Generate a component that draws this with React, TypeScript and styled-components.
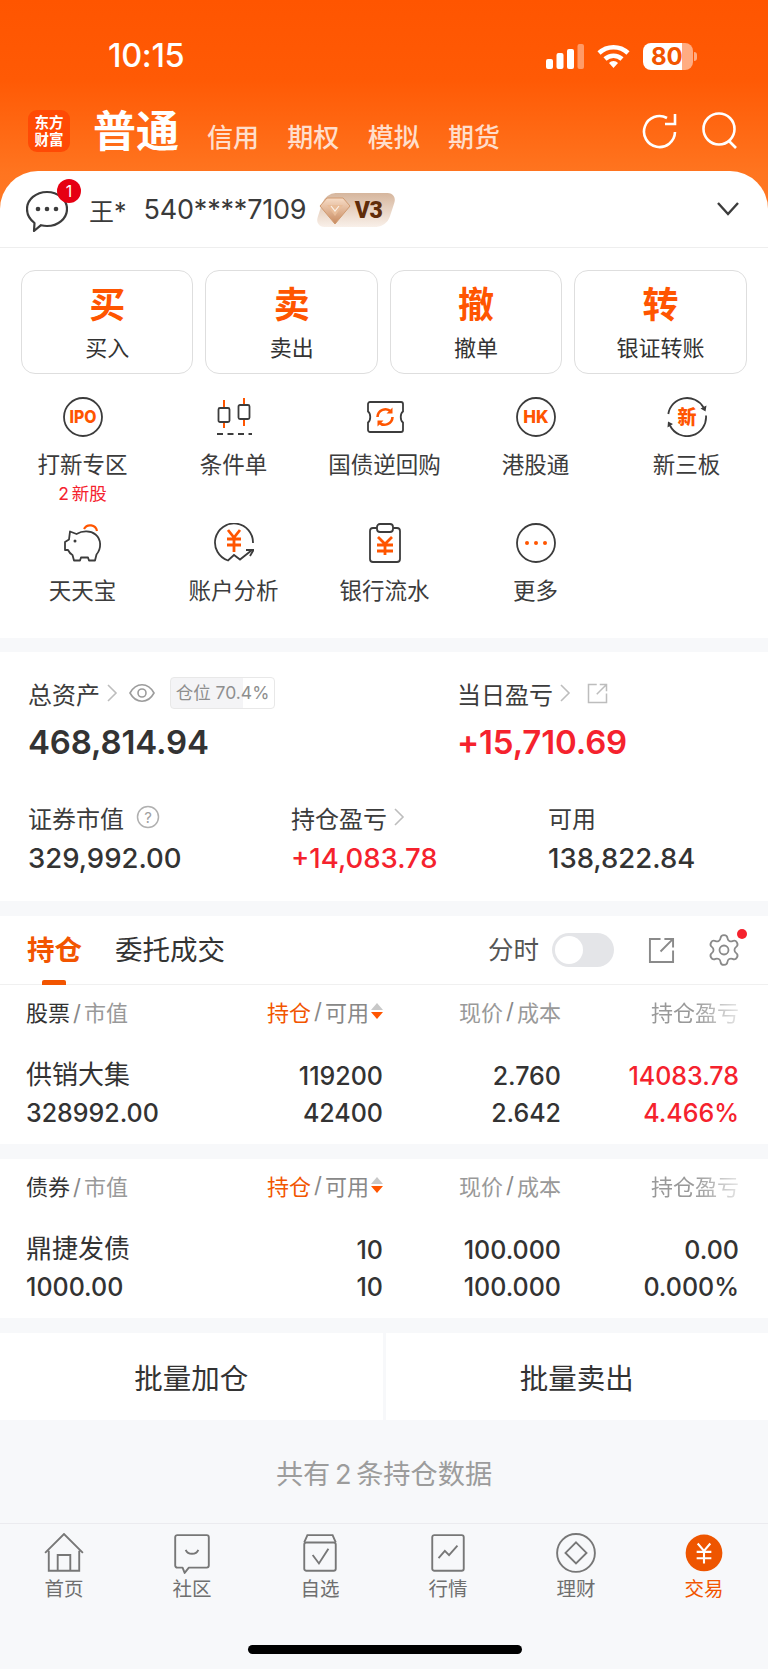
import styled, { createGlobalStyle } from 'styled-components';
import { ReactNode } from 'react';
import { Settings } from 'lucide-react';

const GlobalStyle = createGlobalStyle`
  html, body {
    margin: 0;
    padding: 0;
    background: #f7f8fa;
    font-family: Inter, "Noto Sans CJK SC", sans-serif;
  }
  * { box-sizing: border-box; }
`;

const ORANGE = '#f25500';
const RED = '#f5222d';
const DARK = '#333333';
const GREY = '#999999';

const Page = styled.div`
  width: 768px;
  height: 1669px;
  overflow: hidden;
  display: flex;
  flex-direction: column;
  background: #f7f8fa;
  color: ${DARK};
`;

const Header = styled.header`
  height: 211px;
  margin-bottom: -40px;
  background: linear-gradient(180deg, #ff5500 0, #ff5a05 80px, #ff741f 171px, #ff7a26 211px);
  color: #fff;
  display: flex;
  flex-direction: column;
`;

const StatusBar = styled.div`
  height: 110px;
  padding: 37px 71px 0 108px;
  display: flex;
  justify-content: space-between;
  align-items: flex-start;
`;

const Clock = styled.div`
  font-size: 32.5px;
  font-weight: 500;
  line-height: 38px;
  letter-spacing: -0.3px;
  white-space: nowrap;
`;

const StatusIcons = styled.div`
  display: flex;
  align-items: center;
  height: 38px;
  gap: 13px;
`;

const Battery = styled.div`
  width: 50px;
  height: 27px;
  border-radius: 8px;
  overflow: hidden;
  background: linear-gradient(90deg, #fff 0 78%, rgba(255, 255, 255, 0.5) 78% 100%);
  color: ${ORANGE};
  font-size: 24px;
  font-weight: 700;
  line-height: 27px;
  padding-left: 8px;
`;

const BatteryCap = styled.div`
  width: 3px;
  height: 9px;
  margin-left: -12px;
  border-radius: 0 3px 3px 0;
  background: rgba(255, 255, 255, 0.5);
`;

const TopNav = styled.div`
  height: 42px;
  padding: 0 30px 0 28px;
  display: flex;
  align-items: center;
`;

const Logo = styled.div`
  width: 42px;
  height: 42px;
  border-radius: 9px;
  background: #ff4a05;
  font-size: 14.5px;
  font-weight: 700;
  line-height: 17px;
  text-align: center;
  padding-top: 4px;
  margin-right: 23px;
`;

const ActiveMode = styled.div`
  font-size: 43px;
  font-weight: 700;
  line-height: 42px;
  margin-right: 28px;
`;

const Mode = styled.div`
  font-size: 26px;
  font-weight: 500;
  line-height: 30px;
  margin: 14px 28.3px 0 0;
  color: rgba(255, 255, 255, 0.78);
`;

const NavActions = styled.div`
  margin-left: auto;
  display: flex;
  gap: 24px;
`;

const Account = styled.div`
  height: 77px;
  border-radius: 38px 38px 0 0;
  background: #fff;
  border-bottom: 1.5px solid #eeeeee;
  padding: 0 29px 0 26px;
  display: flex;
  align-items: center;
  flex: none;
  position: relative;
`;

const ChatWrap = styled.div`
  position: relative;
  width: 42px;
  height: 42px;
  margin-right: 21px;
  margin-top: 4px;
`;

const Badge = styled.span`
  position: absolute;
  left: 31px;
  top: -11px;
  width: 24px;
  height: 24px;
  border-radius: 50%;
  background: #e60012;
  color: #fff;
  font-size: 16px;
  line-height: 24px;
  text-align: center;
`;

const AccountName = styled.span`
  font-size: 25px;
  margin-right: 17px;
  color: #3a3a3a;
  margin-top: 1px;
`;

const AccountNo = styled.span`
  font-size: 27px;
  color: #3a3a3a;
  margin-right: 9px;
  margin-top: 1px;
  letter-spacing: -0.2px;
`;

const Level = styled.div`
  position: relative;
  width: 82px;
  height: 34px;
  margin-top: 2px;
  display: flex;
  align-items: center;
  justify-content: flex-end;
  padding-right: 15px;
  color: #5f2c0a;
  font-family: Roboto, sans-serif;
  font-size: 23px;
  font-weight: 900;
  letter-spacing: -0.5px;
`;

const LevelBg = styled.div`
  position: absolute;
  inset: 0 5px;
  transform: skewX(-18deg);
  border-radius: 10px;
  background: linear-gradient(180deg, #d6b69d 0%, #f9f0e9 100%);
`;

const LevelText = styled.span`
  position: relative;
`;

const Chevron = styled.div`
  margin-left: auto;
  display: flex;
`;

const ActionsSection = styled.section`
  background: #fff;
  height: 390px;
  flex: none;
  padding: 22px 21px 0;
  margin-bottom: 14px;
`;

const TradeButtons = styled.div`
  display: grid;
  grid-template-columns: repeat(4, 172.3px);
  column-gap: 12.2px;
`;

const TradeButton = styled.div`
  height: 104px;
  border: 1.5px solid #dedede;
  border-radius: 14px;
  text-align: center;
  padding-top: 9px;
`;

const TradeChar = styled.div`
  font-size: 36px;
  line-height: 50px;
  font-weight: 700;
  color: #ff5500;
`;

const TradeLabel = styled.div`
  font-size: 22px;
  line-height: 30px;
  margin-top: 3px;
  color: ${DARK};
`;

const Shortcuts = styled.div`
  margin: 23px 0 0 -14px;
  display: grid;
  grid-template-columns: repeat(5, 151px);
  grid-auto-rows: 126px;
`;

const Shortcut = styled.div`
  display: flex;
  flex-direction: column;
  align-items: center;
`;

const ShortcutIcon = styled.div`
  width: 40px;
  height: 40px;
`;

const ShortcutLabel = styled.div`
  font-size: 22.5px;
  line-height: 30px;
  margin-top: 13px;
  color: #3c3c3c;
  white-space: nowrap;
`;

const ShortcutNote = styled.div`
  font-size: 17.5px;
  line-height: 24px;
  margin-top: 2px;
  word-spacing: -2px;
  color: ${RED};
`;

const Assets = styled.section`
  background: #fff;
  height: 249px;
  flex: none;
  margin-bottom: 15px;
  padding: 25px 0 0 28px;
`;

const AssetTop = styled.div`
  display: grid;
  grid-template-columns: 429px 1fr;
`;

const AssetBottom = styled.div`
  display: grid;
  grid-template-columns: 263px 257px 1fr;
  margin-top: 37px;
`;

const AssetLabel = styled.div`
  display: flex;
  align-items: center;
  height: 32px;
  font-size: 24px;
  color: #3c3c3c;
  white-space: nowrap;
`;

const AssetValue = styled.div<{ $tone?: string }>`
  font-size: 33px;
  font-weight: 600;
  line-height: 44px;
  margin-top: 11px;
  letter-spacing: -0.15px;
  color: ${(p) => p.$tone ?? DARK};
`;

const SmallValue = styled.div<{ $tone?: string }>`
  font-size: 27.5px;
  font-weight: 500;
  line-height: 38px;
  margin-top: 6px;
  color: ${(p) => p.$tone ?? DARK};
`;

const PositionChip = styled.div`
  width: 105px;
  height: 32px;
  margin-left: 15px;
  border: 1px solid #e8e8e8;
  border-radius: 4px;
  background: linear-gradient(90deg, #f4f4f6 0 70%, #fff 70% 100%);
  color: #8e8e8e;
  font-size: 17.5px;
  line-height: 30px;
  text-align: center;
  white-space: nowrap;
`;

const Holdings = styled.section`
  background: #fff;
  flex: none;
`;

const Tabs = styled.div`
  height: 69px;
  border-bottom: 1.5px solid #f0f0f0;
  padding: 0 26px 0 27px;
  display: flex;
  align-items: center;
  gap: 33px;
`;

const Tab = styled.div<{ $active?: boolean }>`
  position: relative;
  font-size: 27.5px;
  font-weight: ${(p) => (p.$active ? 700 : 400)};
  color: ${(p) => (p.$active ? ORANGE : DARK)};
  line-height: 69px;
  ${(p) =>
    p.$active &&
    `&::after {
      content: '';
      position: absolute;
      left: 15px;
      bottom: 0;
      width: 24px;
      height: 5px;
      border-radius: 2px 2px 0 0;
      background: ${ORANGE};
    }`}
`;

const TabTools = styled.div`
  margin-left: auto;
  display: flex;
  align-items: center;
`;

const TimeLabel = styled.span`
  font-size: 25.5px;
  color: #555;
  margin: 0 13px 6px 0;
`;

const Toggle = styled.div`
  width: 62px;
  height: 34px;
  border-radius: 17px;
  background: #e4e5e8;
  padding: 3px;
  margin-right: 34px;
`;

const ToggleKnob = styled.div`
  width: 28px;
  height: 28px;
  border-radius: 50%;
  background: #fff;
`;

const GearWrap = styled.div`
  position: relative;
  margin-left: 31px;
  display: flex;
`;

const GearDot = styled.span`
  position: absolute;
  right: -5px;
  top: -3px;
  width: 10px;
  height: 10px;
  border-radius: 50%;
  background: ${RED};
`;

const Table = styled.div`
  background: #fff;
  margin-bottom: 15px;
  padding: 0 29px 0 26px;
`;

const HeadRow = styled.div`
  height: 60px;
  padding-bottom: 8px;
  display: grid;
  grid-template-columns: 1fr 153px 178px 178px;
  align-items: center;
  font-size: 22px;
  color: ${GREY};
`;

const BodyRow = styled.div`
  height: 37.5px;
  display: grid;
  grid-template-columns: 1fr 153px 178px 178px;
  align-items: center;
  font-size: 25px;
  font-weight: 500;
  color: ${DARK};
`;

const HeadCell = styled.div<{ $fade?: boolean }>`
  display: flex;
  justify-content: flex-end;
  align-items: center;
  white-space: nowrap;
  ${(p) =>
    p.$fade &&
    `mask-image: linear-gradient(90deg, #000 75%, rgba(0,0,0,0.25) 100%);`}
`;

const HeadFirst = styled.div`
  white-space: nowrap;
`;

const Strong = styled.span`
  color: ${DARK};
`;

const Active = styled.span`
  color: ${ORANGE};
`;

const Slash = styled.span`
  margin: 0 3px;
  color: #888;
`;

const AvailLabel = styled.span`
  color: #888;
`;

const Sort = styled.span`
  display: flex;
  flex-direction: column;
  gap: 2px;
  margin-left: 2px;
`;

const Cell = styled.div<{ $tone?: string }>`
  text-align: right;
  color: ${(p) => p.$tone ?? DARK};
`;

const NameCell = styled.div`
  white-space: nowrap;
`;

const StockName = styled.div`
  font-size: 26px;
  font-weight: 400;
  line-height: 30px;
  margin-top: -2px;
`;

const RowSpacer = styled.div`
  height: 12px;
`;

const RowEnd = styled.div`
  height: 12px;
`;

const BulkBar = styled.div`
  height: 87px;
  flex: none;
  display: grid;
  grid-template-columns: 1fr 1fr;
  gap: 3px;
`;

const BulkButton = styled.div`
  background: #fff;
  font-size: 28.5px;
  color: ${DARK};
  display: flex;
  align-items: center;
  justify-content: center;
`;

const Summary = styled.div`
  height: 103px;
  flex: none;
  display: flex;
  align-items: center;
  justify-content: center;
  font-size: 27.2px;
  word-spacing: -3px;
  color: #9c9c9c;
`;

const TabBar = styled.nav`
  position: relative;
  flex: 1;
  border-top: 1.5px solid #ebebef;
  background: #f7f8fa;
  display: grid;
  grid-template-columns: repeat(6, 128px);
  align-items: start;
`;

const TabItem = styled.div<{ $active?: boolean }>`
  display: flex;
  flex-direction: column;
  align-items: center;
  padding-top: 9px;
  font-size: 19.5px;
  line-height: 26px;
  color: ${(p) => (p.$active ? ORANGE : '#6f6f6f')};
`;

const TabIcon = styled.div`
  width: 42px;
  height: 42px;
  margin-bottom: 1px;
`;

const HomeBar = styled.div`
  position: absolute;
  left: 248px;
  top: 121px;
  width: 274px;
  height: 9px;
  border-radius: 5px;
  background: #000;
`;

const Icon = ({ size = 40, children }: { size?: number; children: ReactNode }) => (
  <svg width={size} height={size} viewBox="0 0 40 40" fill="none" style={{ display: 'block' }}>
    {children}
  </svg>
);

const INK = '#3c3c3c';
const HOT = '#ff5500';
const glyph = {
  fontFamily: 'Inter, "Noto Sans CJK SC", sans-serif',
  fontWeight: 800,
  textAnchor: 'middle' as const,
};

const IpoIcon = () => (
  <Icon>
    <circle cx="20" cy="20" r="19" stroke={INK} strokeWidth="1.8" />
    <text x="20" y="26" fontSize="17" fill={HOT} {...glyph} textLength="27" lengthAdjust="spacingAndGlyphs">IPO</text>
  </Icon>
);

const HkIcon = () => (
  <Icon>
    <circle cx="20" cy="20" r="19" stroke={INK} strokeWidth="1.8" />
    <text x="20" y="26" fontSize="17" fill={HOT} {...glyph}>HK</text>
  </Icon>
);

const NewIcon = () => (
  <Icon>
    <path d="M1.3 17A19 19 0 0 1 36.5 10.5" stroke={INK} strokeWidth="1.8" />
    <path d="M39 18.5A19 19 0 0 1 3 28.5" stroke={INK} strokeWidth="1.8" />
    <path d="M39.5 8.5 38.5 14.5 33.5 11.5zM0.5 30.5 1 24.5 6 27z" fill={INK} />
    <text x="20" y="27" fontSize="19" fill={HOT} {...glyph}>新</text>
  </Icon>
);

const CandleIcon = () => (
  <Icon>
    <path d="M10 3v7M10 25v6M30 1v7M30 22v7" stroke={HOT} strokeWidth="2" />
    <rect x="4.5" y="11" width="11" height="14" rx="1.5" stroke={INK} strokeWidth="1.8" />
    <rect x="24.5" y="8" width="11" height="14" rx="1.5" stroke={INK} strokeWidth="1.8" />
    <path d="M3 37h35" stroke={INK} strokeWidth="1.8" strokeDasharray="6 4.5" />
  </Icon>
);

const TicketIcon = () => (
  <Icon>
    <path d="M5 5h31a2 2 0 0 1 2 2v7.5c-3 2-3 9 0 11V33a2 2 0 0 1-2 2H5a2 2 0 0 1-2-2v-7.5c3-2 3-9 0-11V7a2 2 0 0 1 2-2z" stroke={INK} strokeWidth="1.8" />
    <path d="M12.5 20a8 8 0 0 1 13.5-5.5M27.5 20a8 8 0 0 1-13.5 5.5" stroke={HOT} strokeWidth="2.6" />
    <path d="M27.5 10.5v6h-6zM12.5 29.5v-6h6z" fill={HOT} />
  </Icon>
);

const PigIcon = () => (
  <Icon>
    <path d="M21 6a7 7 0 0 1 13 2" stroke={HOT} strokeWidth="2.2" />
    <path d="M7 8.5l6.5 2.5c6-3.5 14-3.5 19 .5 6 5 6 14 1 20l-1.5 6h-6l-1-3h-7l-1 3h-6l-1.5-5.5c-2-1-3.5-3-4.5-5H2v-8l4-2.5z" stroke={INK} strokeWidth="1.8" strokeLinejoin="round" />
    <circle cx="12" cy="18" r="1.5" fill={INK} />
  </Icon>
);

const AnalysisIcon = () => (
  <Icon>
    <path d="M39 20A19 19 0 1 0 14 37.5L20 32l6 4.5L38 27" stroke={INK} strokeWidth="1.8" />
    <path d="M32 27h7.5L36 33" stroke={INK} strokeWidth="1.8" />
    <path d="M14 7l6 7.5L26 7M13 16h14M13 22h14M20 14.5V29" stroke={HOT} strokeWidth="2.8" />
  </Icon>
);

const BillIcon = () => (
  <Icon>
    <rect x="5" y="5" width="30" height="34" rx="3" stroke={INK} strokeWidth="1.8" />
    <rect x="12" y="1" width="16" height="8" rx="3" fill="#fff" stroke={INK} strokeWidth="1.8" />
    <path d="M13 14l7 7 7-7M12 22h16M12 28h16M20 21v11" stroke={HOT} strokeWidth="2.8" />
  </Icon>
);

const MoreIcon = () => (
  <Icon>
    <circle cx="20" cy="20" r="19" stroke={INK} strokeWidth="1.8" />
    <circle cx="11" cy="20" r="2" fill={HOT} />
    <circle cx="20" cy="20" r="2" fill={HOT} />
    <circle cx="29" cy="20" r="2" fill={HOT} />
  </Icon>
);

const shortcuts: { label: string; icon: ReactNode; note?: string }[] = [
  { label: '打新专区', icon: <IpoIcon />, note: '2 新股' },
  { label: '条件单', icon: <CandleIcon /> },
  { label: '国债逆回购', icon: <TicketIcon /> },
  { label: '港股通', icon: <HkIcon /> },
  { label: '新三板', icon: <NewIcon /> },
  { label: '天天宝', icon: <PigIcon /> },
  { label: '账户分析', icon: <AnalysisIcon /> },
  { label: '银行流水', icon: <BillIcon /> },
  { label: '更多', icon: <MoreIcon /> },
];

const trades = [
  { char: '买', label: '买入' },
  { char: '卖', label: '卖出' },
  { char: '撤', label: '撤单' },
  { char: '转', label: '银证转账' },
];

const TAB = '#777777';
const navTabs: { label: string; icon: ReactNode; active?: boolean }[] = [
  {
    label: '首页',
    icon: (
      <Icon size={42}>
        <path d="M2 19 20 1l18 18M5.5 17v19h29V17M14 36V21h12v15" stroke={TAB} strokeWidth="1.8" />
      </Icon>
    ),
  },
  {
    label: '社区',
    icon: (
      <Icon size={42}>
        <path d="M6 2h28a2 2 0 0 1 2 2v27a2 2 0 0 1-2 2H17l-4 5-2-5H6a2 2 0 0 1-2-2V4a2 2 0 0 1 2-2z" stroke={TAB} strokeWidth="1.8" strokeLinejoin="round" />
        <path d="M14 16c2 5 10 5 12 0" stroke={TAB} strokeWidth="1.8" />
      </Icon>
    ),
  },
  {
    label: '自选',
    icon: (
      <Icon size={42}>
        <path d="M5 9l3-7h24l3 7" stroke={TAB} strokeWidth="1.8" />
        <rect x="5" y="9" width="30" height="27" rx="2" stroke={TAB} strokeWidth="1.8" />
        <path d="M13 21l6 8 9-14" stroke={TAB} strokeWidth="1.8" />
      </Icon>
    ),
  },
  {
    label: '行情',
    icon: (
      <Icon size={42}>
        <rect x="5" y="2" width="30" height="34" rx="2" stroke={TAB} strokeWidth="1.8" />
        <path d="M11 24l6-7 4 4 8-9" stroke={TAB} strokeWidth="1.8" />
      </Icon>
    ),
  },
  {
    label: '理财',
    icon: (
      <Icon size={42}>
        <circle cx="20" cy="19" r="18" stroke={TAB} strokeWidth="1.8" />
        <path d="M20 9l10 10-10 10-10-10z" stroke={TAB} strokeWidth="1.8" />
      </Icon>
    ),
  },
  {
    label: '交易',
    active: true,
    icon: (
      <Icon size={42}>
        <circle cx="20" cy="19" r="17.5" fill="#ee5500" />
        <path d="M14 10l6 7 6-7M13 18h14M13 24h14M20 17v12" stroke="#fff" strokeWidth="2" />
      </Icon>
    ),
  },
];

const SmallChevron = () => (
  <svg width="12" height="22" viewBox="0 0 12 22" fill="none" style={{ marginLeft: 6 }}>
    <path d="M2 3l8 8-8 8" stroke="#bdbdbd" strokeWidth="1.6" />
  </svg>
);

const Eye = () => (
  <svg width="26" height="22" viewBox="0 0 26 22" fill="none" style={{ marginLeft: 11 }}>
    <path d="M1 11c6-11 18-11 24 0-6 11-18 11-24 0z" stroke="#9c9c9c" strokeWidth="1.6" />
    <circle cx="13" cy="11" r="4" stroke="#9c9c9c" strokeWidth="1.6" />
  </svg>
);

const ShareOut = ({ size, color, left }: { size: number; color: string; left?: number }) => (
  <svg width={size} height={size} viewBox="0 0 28 28" fill="none" style={{ marginLeft: left ?? 0, display: 'block' }}>
    <path d="M13 2H2v24h24V14M13 15 26 2M17 2h9v9" stroke={color} strokeWidth="2" />
  </svg>
);

const SortArrows = () => (
  <Sort>
    <svg width="12" height="7" viewBox="0 0 12 7"><path d="M6 0l6 7H0z" fill="#c8c8c8" /></svg>
    <svg width="12" height="7" viewBox="0 0 12 7"><path d="M6 7 0 0h12z" fill={HOT} /></svg>
  </Sort>
);

const HoldingHead = ({ kind }: { kind: string }) => (
  <HeadRow>
    <HeadFirst>
      <Strong>{kind}</Strong>
      <Slash>/</Slash>市值
    </HeadFirst>
    <HeadCell>
      <Active>持仓</Active>
      <Slash>/</Slash>
      <AvailLabel>可用</AvailLabel>
      <SortArrows />
    </HeadCell>
    <HeadCell>
      现价<Slash>/</Slash>成本
    </HeadCell>
    <HeadCell $fade>持仓盈亏</HeadCell>
  </HeadRow>
);

function App() {
  return (
    <Page>
      <GlobalStyle />
      <Header>
        <StatusBar>
          <Clock>10:15</Clock>
          <StatusIcons>
            <svg width="38" height="25" viewBox="0 0 38 25">
              <rect x="0" y="15" width="7" height="10" rx="2" fill="#fff" />
              <rect x="10.5" y="9" width="7" height="16" rx="2" fill="#fff" />
              <rect x="21" y="5" width="7" height="20" rx="2" fill="#fff" />
              <rect x="31.5" y="0" width="6.5" height="25" rx="2" fill="#fff" opacity="0.4" />
            </svg>
            <svg width="33" height="24" viewBox="0 0 33 24" fill="none" stroke="#fff" strokeWidth="4.5">
              <path d="M2 9a21 21 0 0 1 29 0" />
              <path d="M8 15a12.5 12.5 0 0 1 17 0" />
              <path d="M16.5 24l-4.500-5a6 6 0 0 1 9 0z" fill="#fff" stroke="none" />
            </svg>
            <Battery>80</Battery>
            <BatteryCap />
          </StatusIcons>
        </StatusBar>
        <TopNav>
          <Logo>东方<br />财富</Logo>
          <ActiveMode>普通</ActiveMode>
          <Mode>信用</Mode>
          <Mode>期权</Mode>
          <Mode>模拟</Mode>
          <Mode>期货</Mode>
          <NavActions>
            <svg width="36" height="38" viewBox="0 0 36 38" fill="none" stroke="#fff" strokeWidth="2.6">
              <path d="M33 20a15.5 15.5 0 1 1-8-14" />
              <path d="M33 2v10H23" />
            </svg>
            <svg width="36" height="38" viewBox="0 0 36 38" fill="none" stroke="#fff" strokeWidth="2.6">
              <circle cx="17" cy="17" r="15.5" />
              <path d="M27 29l7 7" />
            </svg>
          </NavActions>
        </TopNav>
      </Header>

      <Account>
        <ChatWrap>
          <svg width="42" height="42" viewBox="0 0 42 42" fill="none">
            <path d="M21 2c11 0 20 7.5 20 17s-9 17-20 17c-2 0-4-.3-6-.8L8 41l.5-8C4 29.5 1 24.5 1 19 1 9.5 10 2 21 2z" stroke={INK} strokeWidth="2.2" strokeLinejoin="round" />
            <circle cx="12" cy="19" r="2.3" fill={INK} />
            <circle cx="21" cy="19" r="2.3" fill={INK} />
            <circle cx="30" cy="19" r="2.3" fill={INK} />
          </svg>
          <Badge>1</Badge>
        </ChatWrap>
        <AccountName>王*</AccountName>
        <AccountNo>540****7109</AccountNo>
        <Level>
          <LevelBg />
          <svg width="32" height="28" viewBox="0 0 32 28" style={{ position: 'absolute', left: 4, top: 4 }}>
            <defs>
              <linearGradient id="gem" x1="0" y1="0" x2="0" y2="1">
                <stop offset="0" stopColor="#f7dcc6" />
                <stop offset="1" stopColor="#c88a5f" />
              </linearGradient>
            </defs>
            <path d="M8 1h16l7 8-15 18L1 9z" fill="url(#gem)" stroke="#d09a70" strokeWidth="1" />
            <path d="M8 8h16l-8 11z" fill="#e9bd99" />
            <path d="M12 9l4 5 4-5" fill="none" stroke="#fff" strokeWidth="1.2" opacity="0.8" />
          </svg>
          <LevelText>V3</LevelText>
        </Level>
        <Chevron>
          <svg width="22" height="16" viewBox="0 0 22 16" fill="none">
            <path d="M1 2l10 11L21 2" stroke={INK} strokeWidth="2.4" />
          </svg>
        </Chevron>
      </Account>

      <ActionsSection>
        <TradeButtons>
          {trades.map((t) => (
            <TradeButton key={t.char}>
              <TradeChar>{t.char}</TradeChar>
              <TradeLabel>{t.label}</TradeLabel>
            </TradeButton>
          ))}
        </TradeButtons>
        <Shortcuts>
          {shortcuts.map((s) => (
            <Shortcut key={s.label}>
              <ShortcutIcon>{s.icon}</ShortcutIcon>
              <ShortcutLabel>{s.label}</ShortcutLabel>
              {s.note && <ShortcutNote>{s.note}</ShortcutNote>}
            </Shortcut>
          ))}
        </Shortcuts>
      </ActionsSection>

      <Assets>
        <AssetTop>
          <div>
            <AssetLabel>
              总资产
              <SmallChevron />
              <Eye />
              <PositionChip>仓位 70.4%</PositionChip>
            </AssetLabel>
            <AssetValue>468,814.94</AssetValue>
          </div>
          <div>
            <AssetLabel>
              当日盈亏
              <SmallChevron />
              <ShareOut size={21} color="#bdbdbd" left={16} />
            </AssetLabel>
            <AssetValue $tone={RED}>+15,710.69</AssetValue>
          </div>
        </AssetTop>
        <AssetBottom>
          <div>
            <AssetLabel>
              证券市值
              <svg width="24" height="24" viewBox="0 0 24 24" fill="none" style={{ marginLeft: 12 }}>
                <circle cx="12" cy="12" r="10.5" stroke="#b0b0b0" strokeWidth="1.5" />
                <text x="12" y="17.5" fontSize="15" fill="#a0a0a0" textAnchor="middle" fontFamily="Inter, sans-serif">?</text>
              </svg>
            </AssetLabel>
            <SmallValue>329,992.00</SmallValue>
          </div>
          <div>
            <AssetLabel>
              持仓盈亏
              <SmallChevron />
            </AssetLabel>
            <SmallValue $tone={RED}>+14,083.78</SmallValue>
          </div>
          <div>
            <AssetLabel>可用</AssetLabel>
            <SmallValue>138,822.84</SmallValue>
          </div>
        </AssetBottom>
      </Assets>

      <Holdings>
        <Tabs>
          <Tab $active>持仓</Tab>
          <Tab>委托成交</Tab>
          <TabTools>
            <TimeLabel>分时</TimeLabel>
            <Toggle>
              <ToggleKnob />
            </Toggle>
            <ShareOut size={27} color="#8a8a8a" />
            <GearWrap>
              <Settings size={36} color="#8a8a8a" strokeWidth={1.2} />
              <GearDot />
            </GearWrap>
          </TabTools>
        </Tabs>
      </Holdings>

      <Table>
        <HoldingHead kind="股票" />
        <RowSpacer />
        <BodyRow>
          <NameCell><StockName>供销大集</StockName></NameCell>
          <Cell>119200</Cell>
          <Cell>2.760</Cell>
          <Cell $tone={RED}>14083.78</Cell>
        </BodyRow>
        <BodyRow>
          <NameCell>328992.00</NameCell>
          <Cell>42400</Cell>
          <Cell>2.642</Cell>
          <Cell $tone={RED}>4.466%</Cell>
        </BodyRow>
        <RowEnd />
      </Table>

      <Table>
        <HoldingHead kind="债券" />
        <RowSpacer />
        <BodyRow>
          <NameCell><StockName>鼎捷发债</StockName></NameCell>
          <Cell>10</Cell>
          <Cell>100.000</Cell>
          <Cell>0.00</Cell>
        </BodyRow>
        <BodyRow>
          <NameCell>1000.00</NameCell>
          <Cell>10</Cell>
          <Cell>100.000</Cell>
          <Cell>0.000%</Cell>
        </BodyRow>
        <RowEnd />
      </Table>

      <BulkBar>
        <BulkButton>批量加仓</BulkButton>
        <BulkButton>批量卖出</BulkButton>
      </BulkBar>

      <Summary>共有 2 条持仓数据</Summary>

      <TabBar>
        {navTabs.map((t) => (
          <TabItem key={t.label} $active={t.active}>
            <TabIcon>{t.icon}</TabIcon>
            {t.label}
          </TabItem>
        ))}
        <HomeBar />
      </TabBar>
    </Page>
  );
}

export default App;
